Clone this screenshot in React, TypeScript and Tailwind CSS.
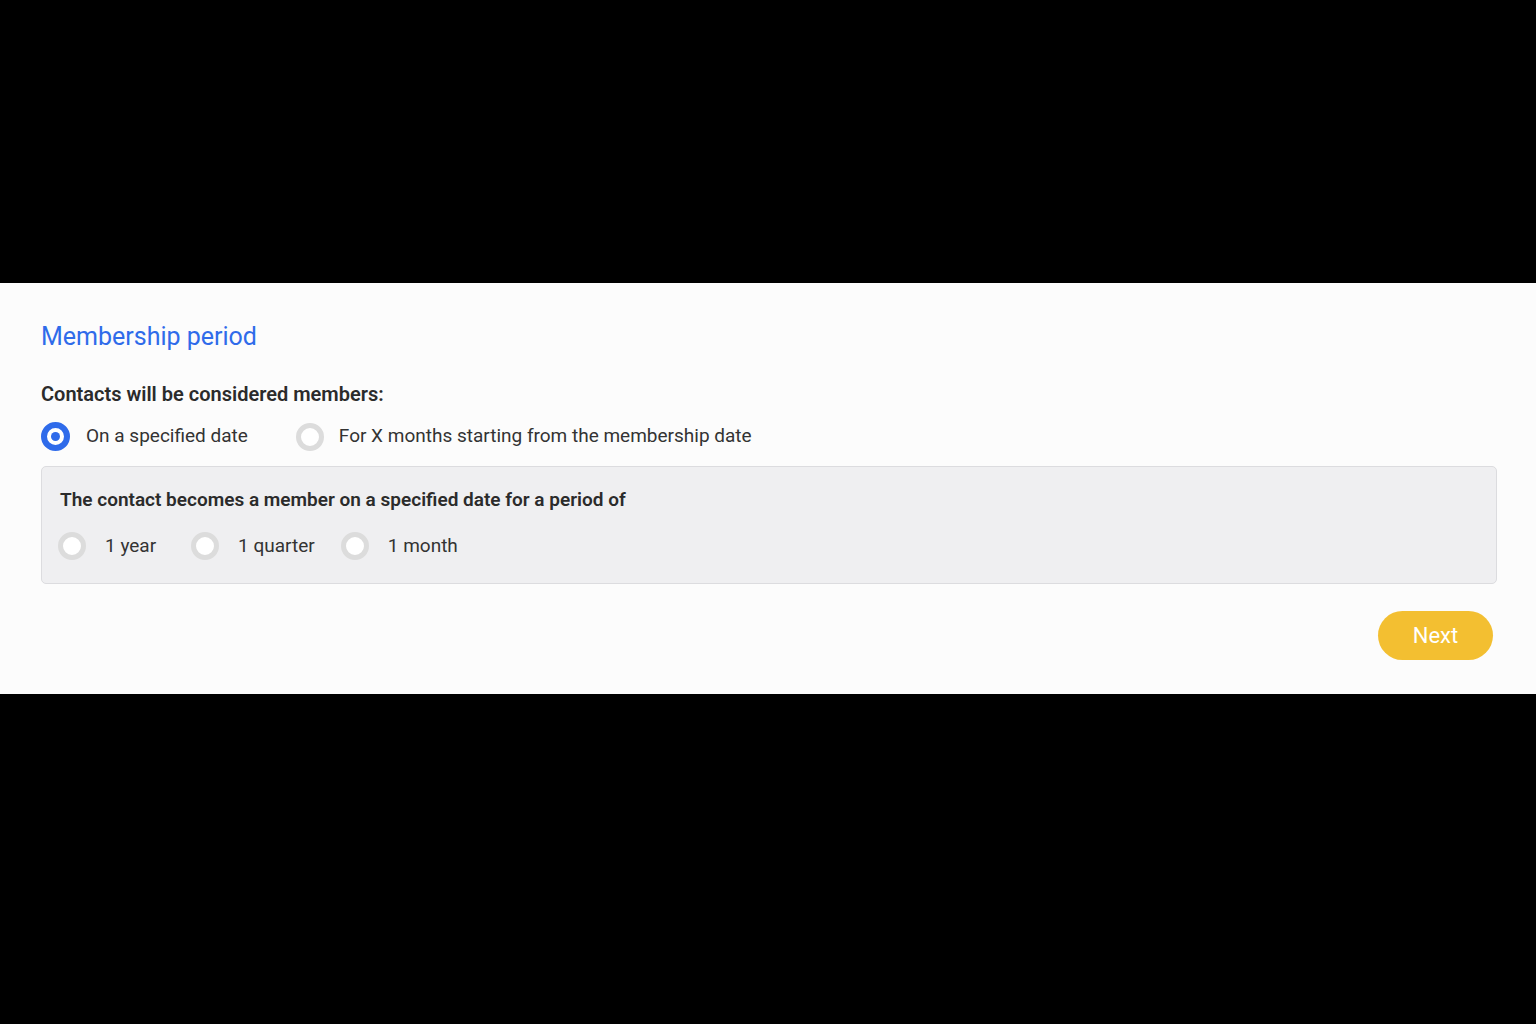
import React, { useState } from "react";

function Radio({ checked }: { checked: boolean }) {
  return checked ? (
    <span className="w-[29px] h-[29px] rounded-full border-[6px] border-[#2f6bea] bg-white flex items-center justify-center shrink-0">
      <span className="w-[9px] h-[9px] rounded-full bg-[#2f6bea]" />
    </span>
  ) : (
    <span className="w-[28px] h-[28px] rounded-full border-[5px] border-[#dcdcdc] bg-white shrink-0" />
  );
}

const periods = [
  { key: "year", label: "1 year", mr: "mr-[35px]" },
  { key: "quarter", label: "1 quarter", mr: "mr-[26px]" },
  { key: "month", label: "1 month", mr: "mr-0" },
];

export default function App() {
  const [mode, setMode] = useState("date");
  const [period, setPeriod] = useState("");

  return (
    <div className="min-h-screen bg-black font-['Roboto',sans-serif]">
      <div className="h-[283px]" />
      <div className="bg-[#fcfcfc] h-[411px] pl-[41px] pr-[39px] pt-[38px]">
        <h2 className="text-[25px] leading-[32px] text-[#2f6bea]">Membership period</h2>

        <p className="mt-[29px] text-[20px] leading-[24px] font-semibold text-[#2b2b2b]">
          Contacts will be considered members:
        </p>

        <div className="mt-[16px] flex items-center">
          <button className="flex items-center gap-[16px]" onClick={() => setMode("date")}>
            <Radio checked={mode === "date"} />
            <span className="text-[19px] text-[#333]">On a specified date</span>
          </button>
          <button className="ml-[48px] flex items-center gap-[15px]" onClick={() => setMode("months")}>
            <Radio checked={mode === "months"} />
            <span className="text-[19px] text-[#333]">For X months starting from the membership date</span>
          </button>
        </div>

        <div className="mt-[15px] h-[118px] rounded-[5px] border border-[#dcdcdf] bg-[#efeff1] pl-[16px] pt-[21px]">
          <p className="pl-[2px] text-[19px] leading-[24px] font-semibold text-[#2b2b2b]">
            The contact becomes a member on a specified date for a period of
          </p>
          <div className="mt-[20px] flex items-center">
            {periods.map((p) => (
              <button
                key={p.key}
                className={`flex items-center gap-[19px] ${p.mr}`}
                onClick={() => setPeriod(p.key)}
              >
                <Radio checked={period === p.key} />
                <span className="text-[19px] text-[#333]">{p.label}</span>
              </button>
            ))}
          </div>
        </div>

        <div className="mt-[27px] flex justify-end pr-[4px]">
          <button className="w-[115px] h-[49px] rounded-full bg-[#f3bf31] text-white text-[22px]">
            Next
          </button>
        </div>
      </div>
    </div>
  );
}
